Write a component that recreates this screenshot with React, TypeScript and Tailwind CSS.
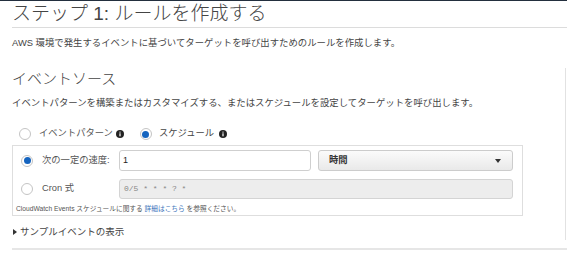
import React from 'react';

const jp = { fontFamily: '"Liberation Sans", "Noto Sans CJK JP", sans-serif' };

function Radio({ checked }: { checked?: boolean }) {
  return (
    <span className="flex h-3 w-3 shrink-0 items-center justify-center rounded-full border border-[#c4c4c4] bg-white">
      {checked && <span className="h-[7px] w-[7px] rounded-full bg-[#1564bf]" />}
    </span>
  );
}

function InfoIcon() {
  return (
    <svg width="8" height="8" viewBox="0 0 8 8" className="shrink-0">
      <circle cx="4" cy="4" r="4" fill="#222" />
      <rect x="3.4" y="3.3" width="1.2" height="3" fill="#fff" />
      <circle cx="4" cy="2.1" r="0.7" fill="#fff" />
    </svg>
  );
}

export default function App() {
  return (
    <div className="h-[253px] w-[567px] overflow-hidden border-t border-[#232f3e] bg-white text-[#444]" style={jp}>
      <div className="pl-3">
        <h1 className="h-[27px] border-b border-[#dcdcdc] text-[19px] leading-[26px] font-light text-[#444]">
          ステップ 1: ルールを作成する
        </h1>
        <p className="mt-2 text-[9.4px] leading-[14px]">
          AWS 環境で発生するイベントに基づいてターゲットを呼び出すためのルールを作成します。
        </p>

        <section className="mt-[18px] w-[554px] border-r border-[#e2e2e2] pb-px">
          <h2 className="pt-px text-[15px] leading-[20px] font-light">イベントソース</h2>
          <p className="mt-[7px] text-[9.4px] leading-[14px]">
            イベントパターンを構築またはカスタマイズする、またはスケジュールを設定してターゲットを呼び出します。
          </p>

          <div className="mt-[17px] flex h-[14px] items-center pl-[7px] text-[9.3px] text-[#555]">
            <Radio />
            <span className="ml-[8px]">イベントパターン</span>
            <span className="ml-[3px]"><InfoIcon /></span>
            <span className="ml-[16px]"><Radio checked /></span>
            <span className="ml-[7px] text-[#444]">スケジュール</span>
            <span className="ml-[5px]"><InfoIcon /></span>
          </div>

          <div className="mt-[4px] h-[71px] w-[511px] border border-[#dedede] pt-[4px]">
            <div className="flex h-[21px] items-center">
              <div className="flex w-[106px] items-center pl-[8px] text-[9.3px] text-[#555]">
                <Radio checked />
                <span className="ml-[9px]">次の一定の速度:</span>
              </div>
              <div className="flex h-[21px] w-[192px] items-center rounded-[3px] border border-[#cfcfcf] bg-white pl-[3px] text-[9px] text-[#222]">
                1
              </div>
              <div className="ml-[7px] flex h-[21px] w-[195px] items-center justify-between rounded-[3px] border border-[#cccccc] bg-gradient-to-b from-[#fbfbfb] to-[#e9e9e9] pl-[10px] pr-[11px] text-[9.3px] font-bold text-[#333]">
                <span>時間</span>
                <svg width="6" height="4" viewBox="0 0 6 4">
                  <path d="M0 0 H6 L3 4 Z" fill="#333" />
                </svg>
              </div>
            </div>

            <div className="mt-[8px] flex h-[20px] items-center">
              <div className="flex w-[106px] items-center pl-[8px] text-[9.3px] text-[#555]">
                <Radio />
                <span className="ml-[9px]">Cron 式</span>
              </div>
              <div
                className="flex h-[20px] w-[394px] items-center rounded-[3px] border border-[#d4d4d4] bg-[#ededed] pl-[4px] text-[8px] text-[#888]"
                style={{ fontFamily: '"Liberation Mono", monospace' }}
              >
                0/5 * * * ? *
              </div>
            </div>

            <p className="mt-[5px] pl-[3px] text-[6.7px] leading-[10px] text-[#555]">
              CloudWatch Events スケジュールに関する <span className="text-[#3b74bb]">詳細はこちら</span> を参照ください。
            </p>
          </div>

          <div className="mt-[9px] flex h-[14px] items-center text-[9.5px] text-[#444]">
            <svg width="4" height="6" viewBox="0 0 4 6" className="ml-[1px] shrink-0">
              <path d="M0 0 L4 3 L0 6 Z" fill="#333" />
            </svg>
            <span className="ml-[3px]">サンプルイベントの表示</span>
          </div>
        </section>

        <div className="mt-[8px] w-[555px] border-t-2 border-[#e6e6e6]" />
      </div>
    </div>
  );
}
